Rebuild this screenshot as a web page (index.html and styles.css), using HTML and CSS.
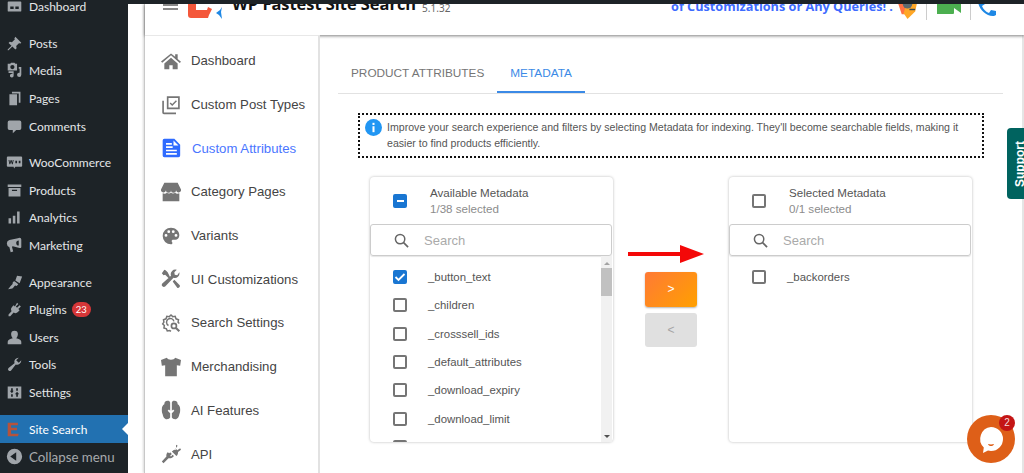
FILE: index.html
```html
<!DOCTYPE html>
<html lang="en">
<head>
  <meta charset="UTF-8">
  <meta name="viewport" content="width=device-width, initial-scale=1.0">
  <title>WP Fastest Site Search</title>
  <link rel="stylesheet" href="styles.css">
</head>
<body>
  <!-- WP ADMIN MENU -->
  <aside class="admin-menu">
    <ul class="admin-list">
      <li class="admin-item"><svg viewBox="0 0 20 20"><path d="M3 4h14a1 1 0 0 1 1 1v10a1 1 0 0 1-1 1H3a1 1 0 0 1-1-1V5a1 1 0 0 1 1-1zm2 6v3h4v-3H5zm6 0v3h4v-3h-4z"/></svg>Dashboard</li>
      <li class="admin-item gap"><svg viewBox="0 0 20 20"><path d="M11 2l7 7-1.5 1.2-1-.7-3.500 3.500.5 2.500L11 17l-3.500-3.500L3 18l-1 0 0-1 4.500-4.500L3 9.500 4.500 8l2.500.5L10.500 5l-.7-1z"/></svg>Posts</li>
      <li class="admin-item"><svg viewBox="0 0 20 20"><path d="M2 2h3l1-1h4l1 1h2v8H2V2zm5.500 1.500a2.500 2.500 0 1 0 0 5 2.500 2.500 0 0 0 0-5zM15 6h3v9a2.500 2.500 0 1 1-2-2.400V8h-1V6zM3 11h6v5a2.200 2.200 0 1 1-1.500-2V13H3v-2z"/></svg>Media</li>
      <li class="admin-item"><svg viewBox="0 0 20 20"><path d="M7 2h10v13h-2V4H7V2zM4 5h9v13H4V5z"/></svg>Pages</li>
      <li class="admin-item"><svg viewBox="0 0 20 20"><path d="M4 3h12a2 2 0 0 1 2 2v7a2 2 0 0 1-2 2h-4l-4 4v-4H4a2 2 0 0 1-2-2V5a2 2 0 0 1 2-2z"/></svg>Comments</li>
      <li class="admin-item gap"><svg viewBox="0 0 20 20"><path d="M2 3h16a1.500 1.500 0 0 1 1 1v10a1.500 1.500 0 0 1-1 1h-7l-1.500 2L9 15H2a1.500 1.500 0 0 1-1-1V4a1.500 1.500 0 0 1 1-1zm1 4l1 5h1l1-3 1 3h1l1-5H8l-.6 3-.9-3h-1l-.9 3L4 7H3zm8 1v3h2V8h-2zm4 0v3h2V8h-2z"/></svg>WooCommerce</li>
      <li class="admin-item"><svg viewBox="0 0 20 20"><path d="M2 3h16v3H2V3zm1 4h14v10H3V7zm4 2v1.500h6V9H7z"/></svg>Products</li>
      <li class="admin-item"><svg viewBox="0 0 20 20"><path d="M3 11h3v6H3v-6zm5-3h3v9H8V8zm5-5h3v14h-3V3z"/></svg>Analytics</li>
      <li class="admin-item"><svg viewBox="0 0 20 20"><path d="M16 1a2 2 0 0 1 2 2v9a2 2 0 0 1-2 1L8 11l-1 .5 1.500 5.500-3 1L4 12a4.500 4.500 0 0 1 0-8.500L14 1.500zM12 7a3 3 0 0 0 3 3V4a3 3 0 0 0-3 3z"/></svg>Marketing</li>
      <li class="admin-item gap"><svg viewBox="0 0 20 20"><path d="M13 2l6 1-3 8-5-3.500L13 2zM10 8.500l4.500 3.500-2 2-1.500-.5-1 .5-1 1.500-1.500 1.500-5 1 3-4 2-2 .5-1.500L8 9.500z"/></svg>Appearance</li>
      <li class="admin-item"><svg viewBox="0 0 20 20"><path d="M13 2l1.500 1.500-3 3L13 8l3-3 1.500 1.500-3 3 1.500 1.500-2 2a4 4 0 0 1-5 .5L5 18H3v-2l3.500-4a4 4 0 0 1 .5-5l2-2 1.500 1.500 2.500-4.500z"/></svg>Plugins<span class="count">23</span></li>
      <li class="admin-item"><svg viewBox="0 0 20 20"><path d="M10 2a4 4 0 0 1 4 4c0 2-1 4-2 5 3 .5 6 2 6 4v3H2v-3c0-2 3-3.500 6-4-1-1-2-3-2-5a4 4 0 0 1 4-4z"/></svg>Users</li>
      <li class="admin-item"><svg viewBox="0 0 20 20"><path d="M18 5a5 5 0 0 1-6.500 5L6 17a2 2 0 1 1-3-3l7-5.500A5 5 0 0 1 15 2l-3 3 3 3 3-3z"/></svg>Tools</li>
      <li class="admin-item"><svg viewBox="0 0 20 20"><path d="M2 3h16v14H2V3zm4 2v3H4.500L7 11 9 8H8V5H6zm0 7v3h2v-3H6zm6-7v3h2V5h-2zm1 4l-2.500 3H12v3h2v-3h1.500L13 9z"/></svg>Settings</li>
      <li class="admin-item gap current"><svg viewBox="0 0 20 20"><path class="logo-e" d="M2 2h12v3H6v3h7v3H6v4h9l-1 3H2V2z"/></svg>Site Search</li>
      <li class="admin-item collapse"><svg viewBox="0 0 20 20"><path d="M10 1a9 9 0 1 1 0 18 9 9 0 0 1 0-18zm2 4l-7 5 7 5V5z"/></svg>Collapse menu</li>
    </ul>
  </aside>

  <div class="page">
    <div class="admin-bar"></div>
    <div class="app">
      <!-- HEADER -->
      <header class="app-header">
        <div class="hamburger"><span></span><span></span><span></span></div>
        <svg class="brand-logo" viewBox="0 0 36 28"><path fill="#f4573a" d="M0 0h8v15h11l1-3 4 2-3 6-1 3H3a3 3 0 0 1-3-3z"/><path fill="#1e88e5" d="M34 12l-1 5 1 7-3-4-3-2 4-3z"/></svg>
        <span class="brand-name">WP Fastest Site Search</span>
        <span class="brand-version">5.1.32</span>
        <span class="header-link">of Customizations or Any Queries! .</span>
        <svg class="agent" viewBox="0 0 24 24"><path fill="#ff7043" d="M2 5l6-3 4 3v12l-6 0z"/><path fill="#ffa726" d="M12 2l10 3-2 9-8 8-4-6z"/><circle cx="12" cy="6" r="5" fill="#5d6a70"/><path fill="none" stroke="#37474f" stroke-width="1.500" d="M14 12h6"/></svg>
        <div class="header-action"><svg viewBox="0 0 26 20"><path fill="#4caf50" d="M1 0h16a1 1 0 0 1 1 1v6l7-5v14l-7-5v5a1 1 0 0 1-1 1H1z"/></svg></div>
        <div class="header-action"><svg viewBox="0 0 26 20"><path fill="#1e88e5" d="M2 0h5l1 5-3 2c1 3 4 6 7 7l2-3 5 1v4l-2 1C9 18 1 9 1 2z"/></svg></div>
      </header>

      <div class="app-body">
        <!-- PLUGIN NAV -->
        <nav class="side-nav">
          <a class="nav-item"><svg viewBox="0 0 24 24"><path d="M12 3l5 4V4h3v5.500l4 3.500-1.500 1.500L12 5 1.500 14 0 12.500zM4 15l8-7 8 7v7h-6v-5h-4v5H4z"/></svg>Dashboard</a>
          <a class="nav-item"><svg viewBox="0 0 24 24"><path fill="none" stroke="currentColor" stroke-width="2" d="M8 2.500h13.500V16H8zM2.500 7v14a1 1 0 0 0 1 1H18"/><path fill="none" stroke="currentColor" stroke-width="1.700" d="M11 9.500l2.500 2.500 5-5"/></svg>Custom Post Types</a>
          <a class="nav-item active"><svg viewBox="0 0 24 24"><path d="M4 1h12l7 7v13a2 2 0 0 1-2 2H4a2 2 0 0 1-2-2V3a2 2 0 0 1 2-2zm2 9v2h8v-2H6zm0-4v2h7V6H6zm0 8v2h13v-2H6zm0 4v2h13v-2H6zm9-15v6h6z"/></svg><span class="nav-label-active">Custom Attributes</span></a>
          <a class="nav-item"><svg viewBox="0 0 24 24"><path d="M4 1h16l4 8a3 3 0 0 1-6 1 3 3 0 0 1-6 0 3 3 0 0 1-6 0 3 3 0 0 1-6-1zM2 13.500c2 1 4 .5 5-.5 1.200 1 3.500 1.500 5 0 1.500 1.500 3.800 1 5 0 1 1 3 1.500 5 .5V23H2z"/></svg>Category Pages</a>
          <a class="nav-item"><svg viewBox="0 0 24 24"><path d="M12 2a10 10 0 0 0 0 20c1 0 1.700-.7 1.700-1.600 0-.5-.2-.9-.5-1.200-.3-.3-.4-.7-.4-1.100 0-1 .8-1.700 1.700-1.700H17c3 0 5-2.400 5-5.400C22 6 17.500 2 12 2zM6 13a1.700 1.700 0 1 1 0-3.400A1.700 1.700 0 0 1 6 13zm3.300-4.500a1.700 1.700 0 1 1 0-3.400 1.700 1.700 0 0 1 0 3.400zm5.400 0a1.700 1.700 0 1 1 0-3.400 1.700 1.700 0 0 1 0 3.400zM18 13a1.700 1.700 0 1 1 0-3.400 1.700 1.700 0 0 1 0 3.400z"/></svg>Variants</a>
          <a class="nav-item"><svg viewBox="0 0 24 24"><path d="M1 5l3-4 1.500.5L8 4l3 6-1.500 1.500L5 7l-2 .5zM22 4a5.500 5.500 0 0 1-7 6.500L5 21a2.500 2.500 0 0 1-3.500-3.500L12 8A5.500 5.500 0 0 1 19 1l-3 3 .5 3 3 .5zM14 15l2-2 6.500 6.500a2.300 2.300 0 0 1-3 3z"/></svg>UI Customizations</a>
          <a class="nav-item"><svg viewBox="0 0 24 24"><path fill="none" stroke="currentColor" stroke-width="1.800" d="M12 2l2 2.500 3-.5 1 3 3 1-.5 3 1.500 1.500M12 2l-2 2.500-3-.5-1 3-3 1 .5 3L2 13l2 2-.5 3 3 1 1 2.500 3-.5 1.500 1M9 15a4.500 4.500 0 1 1 6.500-5"/><circle cx="15.500" cy="15.500" r="3" fill="none" stroke="currentColor" stroke-width="2"/><path stroke="currentColor" stroke-width="2.500" d="M18 18l4 4"/></svg>Search Settings</a>
          <a class="nav-item"><svg viewBox="0 0 24 24"><path d="M7 1c1 3 9 3 10 0l7 2.500-1 7-4-.5v13H5V10l-4 .5-1-7z"/></svg>Merchandising</a>
          <a class="nav-item"><svg viewBox="0 0 24 24"><path d="M8 1c-3 0-4 2-4 4-2 1-3 3-3 6 0 2 0 4 1 6 .5 3 2 6 5 6 2 0 3.500-1 4-2v-5L8 13l1.500-1.500L11 13V3c-.5-1.500-1.500-2-3-2zm8 0c-1.500 0-2.500.5-3 2v10l1.500-1.500L16 13l-3 3v5c.5 1 2 2 4 2 3 0 4.500-3 5-6 1-2 1-4 1-6 0-3-1-5-3-6 0-2-1-4-4-4z"/></svg>AI Features</a>
          <a class="nav-item"><svg viewBox="0 0 24 24"><path d="M18 1l2 1-2.500 3.500 2 2L23 5l1 2-3.500 2.500c0 2-.5 3.500-2 5L13 9c1.500-1.500 3-2 5-2zM10 11l1-1 2 2-2 2 1 1 2-2 1.500 1.500-1 1c-1.500 1.500-3.500 2-5.500 1.500L3 23l-2-2 5.500-6C6 13 7 11 8 10z"/></svg>API</a>
        </nav>

        <!-- CONTENT -->
        <main class="content">
          <div class="tabs">
            <div class="tab">Product Attributes</div>
            <div class="tab tab-active">Metadata</div>
          </div>

          <div class="notice">
            <svg class="notice-icon" viewBox="0 0 20 20"><circle cx="10" cy="10" r="10" fill="#2196f3"/><rect x="8.800" y="8.500" width="2.400" height="7" fill="#fff"/><rect x="8.800" y="4.500" width="2.400" height="2.500" fill="#fff"/></svg>
            <p class="notice-text">Improve your search experience and filters by selecting Metadata for indexing. They'll become searchable fields, making it easier to find products efficiently.</p>
          </div>

          <div class="transfer">
            <section class="card">
              <div class="card-head">
                <span class="check check-mixed"></span>
                <div>
                  <div class="card-title">Available Metadata</div>
                  <div class="card-sub">1/38 selected</div>
                </div>
              </div>
              <div class="search">
                <svg class="search-icon" viewBox="0 0 16 16"><circle cx="6.500" cy="6.500" r="5" fill="none" stroke="#666" stroke-width="1.600"/><path d="M10 10l5 5" stroke="#666" stroke-width="1.800"/></svg>
                <span class="search-text">Search</span>
              </div>
              <div class="list">
                <ul class="rows">
                  <li class="row"><span class="check check-on"><svg viewBox="0 0 14 14"><path d="M2.500 7l3 3 6-6" fill="none" stroke="#fff" stroke-width="1.800"/></svg></span>_button_text</li>
                  <li class="row"><span class="check"></span>_children</li>
                  <li class="row"><span class="check"></span>_crosssell_ids</li>
                  <li class="row"><span class="check"></span>_default_attributes</li>
                  <li class="row"><span class="check"></span>_download_expiry</li>
                  <li class="row"><span class="check"></span>_download_limit</li>
                  <li class="row"><span class="check"></span>_downloadable</li>
                </ul>
                <div class="scrollbar">
                  <span class="arrow-up"></span>
                  <span class="thumb"></span>
                  <span class="arrow-down"></span>
                </div>
              </div>
            </section>

            <div class="move-btns">
              <button class="move-btn move-on">&gt;</button>
              <button class="move-btn move-off">&lt;</button>
            </div>

            <section class="card">
              <div class="card-head">
                <span class="check"></span>
                <div>
                  <div class="card-title">Selected Metadata</div>
                  <div class="card-sub">0/1 selected</div>
                </div>
              </div>
              <div class="search">
                <svg class="search-icon" viewBox="0 0 16 16"><circle cx="6.500" cy="6.500" r="5" fill="none" stroke="#666" stroke-width="1.600"/><path d="M10 10l5 5" stroke="#666" stroke-width="1.800"/></svg>
                <span class="search-text">Search</span>
              </div>
              <div class="list">
                <ul class="rows">
                  <li class="row"><span class="check"></span>_backorders</li>
                </ul>
              </div>
            </section>
          </div>
        </main>
      </div>
    </div>
  </div>

  <!-- COSAS ENCIMA -->
  <svg class="red-arrow" viewBox="0 0 76 18"><path fill="#f40808" d="M0 7h52V0l24 9-24 9v-7H0z"/></svg>
  <div class="support-tab"><span>Support</span></div>
  <div class="chat">
    <svg viewBox="0 0 30 30"><path fill="#fff" d="M15 3a12 12 0 0 1 0 24c-1 0-2-.1-3-.4L7 29l.8-5.500A12 12 0 0 1 15 3z"/><path fill="#de5f18" d="M12 20c2 .6 4 .6 6 0-.5 1.500-1.500 2-3 2s-2.500-.5-3-2z"/></svg>
    <span class="chat-badge">2</span>
  </div>
</body>
</html>
```

FILE: styles.css
```css
body {
  margin: 0;
  height: 473px;
  overflow: hidden;
  display: flex;
  background-color: white;
  font-family: 'Liberation Sans', Arial, sans-serif;
  color: #444;
}

ul {
  margin: 0;
  padding: 0;
  list-style: none;
}

/* WP admin menu */
.admin-menu {
  width: 128px;
  flex-shrink: 0;
  background-color: #1d2327;
  overflow: hidden;
  color: #e4e6e8;
  font-family: Lato, sans-serif;
  font-size: 12px;
}

.admin-list {
  margin-top: -7px;
}

.admin-item {
  display: flex;
  align-items: center;
  height: 27.6px;
  padding-left: 6px;
  white-space: nowrap;
}

.admin-item svg {
  width: 17px;
  height: 17px;
  margin-right: 6px;
  flex-shrink: 0;
  fill: #a0a5aa;
}

.admin-item.gap {
  margin-top: 9px;
}

.admin-item.current {
  position: relative;
  background-color: #2271b1;
  color: white;
}

.admin-item.current::after {
  content: "";
  position: absolute;
  right: 0;
  top: 8px;
  border: 6px solid transparent;
  border-right-color: white;
  border-left: 0;
}

.admin-item svg .logo-e {
  fill: #b5533c;
}

.admin-item.collapse {
  color: #a7aaad;
  font-size: 13.3px;
}

.count {
  margin-left: 5px;
  padding: 0 4px;
  height: 15px;
  line-height: 15px;
  border-radius: 8px;
  background-color: #d63638;
  color: white;
  font-size: 9.5px;
}

/* page frame */
.page {
  flex: 1;
  display: flex;
  flex-direction: column;
  min-width: 0;
}

.admin-bar {
  height: 4px;
  background-color: #1d2327;
  position: relative;
  z-index: 5;
}

.app {
  flex: 1;
  margin-left: 16px;
  border-left: 1px solid #c8c8c8;
  box-shadow: -1px 0 2px rgba(0, 0, 0, 0.15);
  display: flex;
  flex-direction: column;
  min-height: 0;
}

/* header */
.app-header {
  height: 31px;
  flex-shrink: 0;
  display: flex;
  align-items: flex-start;
  overflow: hidden;
  box-shadow: 0 1px 3px rgba(0, 0, 0, 0.5);
  position: relative;
  z-index: 1;
  color: #111;
}

.hamburger {
  margin: -4px 0 0 18px;
  width: 15px;
  display: flex;
  flex-direction: column;
  gap: 2px;
}

.hamburger span {
  height: 2px;
  background-color: #888;
}

.brand-logo {
  width: 36px;
  height: 28px;
  margin: -9px 0 0 10px;
  flex-shrink: 0;
}

.brand-name {
  margin: -12px 0 0 8px;
  font-family: 'Open Sans', sans-serif;
  font-weight: 700;
  font-size: 16.4px;
  line-height: 24px;
  white-space: nowrap;
}

.brand-version {
  margin: -3px 0 0 6px;
  font-family: 'Noto Sans', sans-serif;
  font-size: 10px;
  line-height: 14px;
  color: #666;
}

.header-link {
  margin: -7px 0 0 auto;
  font-family: 'Open Sans', sans-serif;
  font-weight: 700;
  font-size: 12.7px;
  line-height: 18px;
  color: #3d6bff;
  white-space: nowrap;
}

.agent {
  width: 23px;
  height: 23px;
  margin: -6px 7px 0 3px;
  flex-shrink: 0;
}

.header-action {
  height: 16px;
  width: 44px;
  border-left: 1px solid #ccc;
  padding-left: 9px;
  box-sizing: border-box;
  overflow: hidden;
}

.header-action:last-child {
  margin-right: 24px;
  width: 30px;
  padding-left: 6px;
}

.header-action svg {
  display: block;
  width: 26px;
  height: 20px;
  margin-top: -7px;
}

.header-action:last-child svg {
  margin-top: -5px;
}

/* body */
.app-body {
  flex: 1;
  display: flex;
  min-height: 0;
}

.side-nav {
  width: 173px;
  flex-shrink: 0;
  padding-top: 3px;
  background-color: white;
  border-top: 1px solid #e8e8e8;
  border-right: 2px solid #e2e2e2;
  position: relative;
  z-index: 2;
  font-size: 13.2px;
  overflow: hidden;
}

.nav-item {
  display: flex;
  align-items: center;
  height: 43.7px;
  padding-left: 16px;
  color: #444;
  white-space: nowrap;
}

.nav-item svg {
  width: 20px;
  height: 20px;
  margin-right: 10px;
  flex-shrink: 0;
  fill: #757575;
  color: #757575;
}

.nav-item.active svg {
  fill: #2f6bff;
}

.nav-label-active {
  margin-left: 1px;
  color: #4a76ff;
}

/* content */
.content {
  flex: 1;
  padding: 10px 19px 0 18px;
  border-right: 2px solid #e5e5e5;
  min-width: 0;
}

.tabs {
  display: flex;
  border-bottom: 1px solid #e2e2e2;
  height: 48px;
}

.tab {
  padding: 5px 13px 0;
  height: 48px;
  line-height: 46px;
  box-sizing: border-box;
  font-size: 11.8px;
  text-transform: uppercase;
  color: #757575;
}

.tab-active {
  color: #3b8ae6;
  border-bottom: 2px solid #3b8ae6;
}

.notice {
  display: flex;
  width: 626px;
  height: 45px;
  margin: 19px 0 0 20px;
  padding: 4px 0 0 5px;
  box-sizing: border-box;
  border: 2px dotted #111;
}

.notice-icon {
  width: 17px;
  height: 17px;
  flex-shrink: 0;
}

.notice-text {
  margin: 1px 0 0 5px;
  font-size: 10.6px;
  line-height: 15.500px;
  color: #555;
}

.transfer {
  display: flex;
  gap: 32px;
  margin: 19px 0 0 32px;
}

.card {
  width: 243px;
  height: 265px;
  flex-shrink: 0;
  display: flex;
  flex-direction: column;
  border-radius: 4px;
  box-shadow: 0 0 3px rgba(0, 0, 0, 0.28);
}

.card-head {
  height: 47px;
  flex-shrink: 0;
  display: flex;
  align-items: center;
  gap: 23px;
  padding-left: 23px;
}

.card-title {
  font-size: 11.6px;
  line-height: 16px;
  color: #555;
}

.card-sub {
  font-size: 11.6px;
  line-height: 16px;
  color: #8c8c8c;
}

.check {
  display: block;
  width: 14px;
  height: 14px;
  box-sizing: border-box;
  flex-shrink: 0;
  border: 2px solid #757575;
  border-radius: 2px;
}

.check-on,
.check-mixed {
  position: relative;
  border-color: #1976d2;
  background-color: #1976d2;
}

.check-on svg {
  display: block;
  position: absolute;
  left: -2px;
  top: -2px;
  width: 14px;
  height: 14px;
}

.check-mixed::after {
  content: "";
  position: absolute;
  left: 1.500px;
  top: 4px;
  width: 7px;
  height: 2px;
  background-color: white;
}

.search {
  height: 32px;
  flex-shrink: 0;
  box-sizing: border-box;
  margin: 0 1px 0 0;
  display: flex;
  align-items: center;
  padding-left: 23px;
  border: 1px solid #ccc;
  border-radius: 3px;
  box-shadow: 0 1px 1px rgba(0, 0, 0, 0.1);
}

.search-icon {
  width: 15px;
  height: 15px;
  margin-right: 15px;
}

.search-text {
  font-size: 13px;
  color: #aaa;
}

.list {
  flex: 1;
  display: flex;
  min-height: 0;
  overflow: hidden;
}

.rows {
  flex: 1;
  padding-top: 7px;
}

.row {
  display: flex;
  align-items: center;
  gap: 21px;
  height: 28.300px;
  padding-left: 23px;
  font-size: 11.400px;
  color: #555;
}

.scrollbar {
  width: 11px;
  margin-right: 1px;
  flex-shrink: 0;
  display: flex;
  flex-direction: column;
  align-items: center;
  background-color: #f1f1f1;
}

.arrow-up {
  margin-top: 6px;
  border: 3px solid transparent;
  border-top: 0;
  border-bottom: 3px solid #a3a3a3;
}

.thumb {
  width: 100%;
  height: 28px;
  margin-top: 3px;
  background-color: #c1c1c1;
}

.arrow-down {
  margin: auto 0 4px;
  border: 3px solid transparent;
  border-bottom: 0;
  border-top: 3px solid #505050;
}

.move-btns {
  width: 52px;
  flex-shrink: 0;
  padding-top: 95px;
  display: flex;
  flex-direction: column;
  gap: 6px;
}

.move-btn {
  height: 34.500px;
  border: none;
  border-radius: 3px;
  font-family: 'Liberation Sans', sans-serif;
  font-size: 12px;
  padding: 0;
}

.move-on {
  background: linear-gradient(135deg, #ff7a35, #ffa000);
  box-shadow: 0 1px 2px rgba(0, 0, 0, 0.3);
  color: white;
}

.move-off {
  background-color: #e0e0e0;
  color: #a5a5a5;
}

/* overlays */
.red-arrow {
  position: absolute;
  left: 628px;
  top: 245px;
  width: 76px;
  height: 18px;
}

.support-tab {
  position: absolute;
  right: 0;
  top: 128px;
  width: 17px;
  height: 71px;
  box-sizing: border-box;
  overflow: hidden;
  background-color: #00635f;
  border-radius: 4px 0 0 4px;
  color: white;
  font-size: 12px;
  font-weight: 700;
  display: flex;
  align-items: center;
  justify-content: center;
}

.support-tab span {
  transform: rotate(-90deg) translateY(4px);
  white-space: nowrap;
}

.chat {
  position: absolute;
  left: 967px;
  top: 415px;
  width: 48px;
  height: 48px;
  border-radius: 50%;
  background-color: #de5f18;
  display: flex;
  align-items: center;
  justify-content: center;
}

.chat svg {
  width: 30px;
  height: 30px;
}

.chat-badge {
  position: absolute;
  right: 0;
  top: 0;
  width: 16px;
  height: 16px;
  border-radius: 50%;
  background-color: #c41515;
  color: #f3dcdc;
  font-size: 10px;
  font-weight: 500;
  text-align: center;
  line-height: 16px;
}
```
